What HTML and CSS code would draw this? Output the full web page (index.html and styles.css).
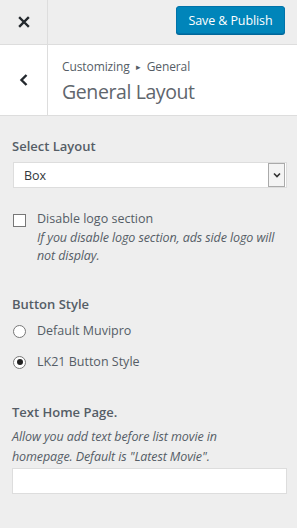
FILE: index.html
```html
<!DOCTYPE html>
<html>
<head>
<meta charset="utf-8">
<link rel="stylesheet" href="styles.css">
</head>
<body>
<div class="topbar">
  <div class="close">
    <svg width="12" height="12" viewBox="0 0 12 12"><path d="M2 2L10 10M10 2L2 10" stroke="#23282d" stroke-width="2.4" stroke-linecap="square"/></svg>
  </div>
  <div class="spacer"></div>
  <button class="publish">Save &amp; Publish</button>
</div>
<div class="sectionhead">
  <div class="back">
    <svg width="10" height="14" viewBox="0 0 10 14"><path d="M7.5 2L2.5 7L7.5 12" stroke="#23282d" stroke-width="2.4" fill="none"/></svg>
  </div>
  <div class="titles">
    <div class="crumb">Customizing <span class="tri">&#9656;</span> General</div>
    <div class="title">General Layout</div>
  </div>
</div>
<div class="content">
  <div class="control first">
    <div class="label">Select Layout</div>
    <div class="select">
      <span class="selval">Box</span>
      <span class="arrow"><svg width="8" height="6" viewBox="0 0 8 6"><path d="M1 1.5L4 4.5L7 1.5" stroke="#333" stroke-width="1.6" fill="none"/></svg></span>
    </div>
  </div>
  <div class="control check">
    <span class="box"></span>
    <div class="checktext">
      <div class="optlabel">Disable logo section</div>
      <div class="desc">If you disable logo section, ads side logo will not display.</div>
    </div>
  </div>
  <div class="control buttons">
    <div class="label">Button Style</div>
    <div class="radio"><span class="rad"></span><span class="optlabel">Default Muvipro</span></div>
    <div class="radio"><span class="rad on"></span><span class="optlabel">LK21 Button Style</span></div>
  </div>
  <div class="control text">
    <div class="label">Text Home Page.</div>
    <div class="desc wide">Allow you add text before list movie in homepage. Default is "Latest Movie".</div>
    <div class="input"></div>
  </div>
</div>
</body>
</html>
```
FILE: styles.css
```css
html, body {
  margin: 0;
  padding: 0;
  background: #eeeeee;
  font-family: "Open Sans", "Noto Sans", sans-serif;
  color: #555d66;
}
.topbar {
  height: 44px;
  display: flex;
  align-items: flex-start;
  border-bottom: 1px solid #dddddd;
  background: #eeeeee;
}
.close {
  width: 47px;
  height: 44px;
  border-right: 1px solid #dddddd;
  display: flex;
  align-items: center;
  justify-content: center;
}
.spacer { flex: 1; }
.publish {
  margin-right: 12px;
  margin-top: 6px;
  height: 28px;
  width: 109px;
  padding: 0;
  background: #0085ba;
  border: 1px solid #0073aa;
  border-radius: 3px;
  color: #ffffff;
  font-family: "Open Sans", sans-serif;
  font-size: 12.5px;
  letter-spacing: -0.1px;
  box-shadow: 0 1px 0 #006799;
}
.sectionhead {
  display: flex;
  height: 70px;
  background: #ffffff;
  border-bottom: 1px solid #dddddd;
}
.back {
  width: 47px;
  border-right: 1px solid #dddddd;
  display: flex;
  align-items: center;
  justify-content: center;
}
.titles {
  padding: 12px 0 0 14px;
}
.crumb {
  font-size: 12px;
  line-height: 20px;
  color: #555d66;
  letter-spacing: -0.1px;
}
.tri {
  font-size: 9px;
  margin: 0 3px;
  position: relative;
  top: -1px;
}
.title {
  font-size: 19.5px;
  line-height: 28px;
  color: #5f666d;
  letter-spacing: -0.4px;
  margin-top: 0px;
}
.content {
  padding: 20px 10px 0 12px;
}
.label {
  font-size: 13px;
  font-weight: 600;
  line-height: 20px;
  color: #555d66;
}
.first .label { margin-bottom: 6px; }
.select {
  height: 24px;
  margin-left: 1px;
  background: #ffffff;
  border: 1px solid #dddddd;
  display: flex;
  align-items: center;
  font-size: 12.5px;
  color: #32373c;
}
.selval { flex: 1; padding-left: 10px; }
.arrow {
  width: 15px;
  height: 22px;
  margin-right: 1px;
  border: 1px solid #aaaaaa;
  background: #f4f4f4;
  display: flex;
  align-items: center;
  justify-content: center;
}
.check {
  display: flex;
  align-items: flex-start;
  margin-top: 21px;
}
.box {
  width: 11px;
  height: 11px;
  border: 1px solid #777;
  background: #fff;
  margin: 5px 11px 0 1px;
  flex: none;
}
.optlabel {
  font-size: 12.5px;
  line-height: 20px;
  color: #555d66;
}
.desc {
  font-size: 12.5px;
  font-style: italic;
  line-height: 18px;
  color: #555d66;
  letter-spacing: -0.1px;
}
.desc.wide {
  line-height: 20px;
  margin-top: 5px;
  padding-right: 20px;
}
.buttons { margin-top: 29px; }
.radio {
  display: flex;
  align-items: center;
  height: 20px;
  margin-top: 7px;
}
.radio + .radio { margin-top: 11px; }
.rad {
  width: 11px;
  height: 11px;
  border: 1px solid #777;
  border-radius: 50%;
  background: #fff;
  margin: 0 11px 0 1px;
  position: relative;
  flex: none;
}
.rad.on::after {
  content: "";
  position: absolute;
  left: 2.5px;
  top: 2.5px;
  width: 6px;
  height: 6px;
  border-radius: 50%;
  background: #222;
}
.text { margin-top: 30px; }
.input {
  height: 24px;
  margin-top: 1px;
  background: #fff;
  border: 1px solid #dddddd;
}
```
